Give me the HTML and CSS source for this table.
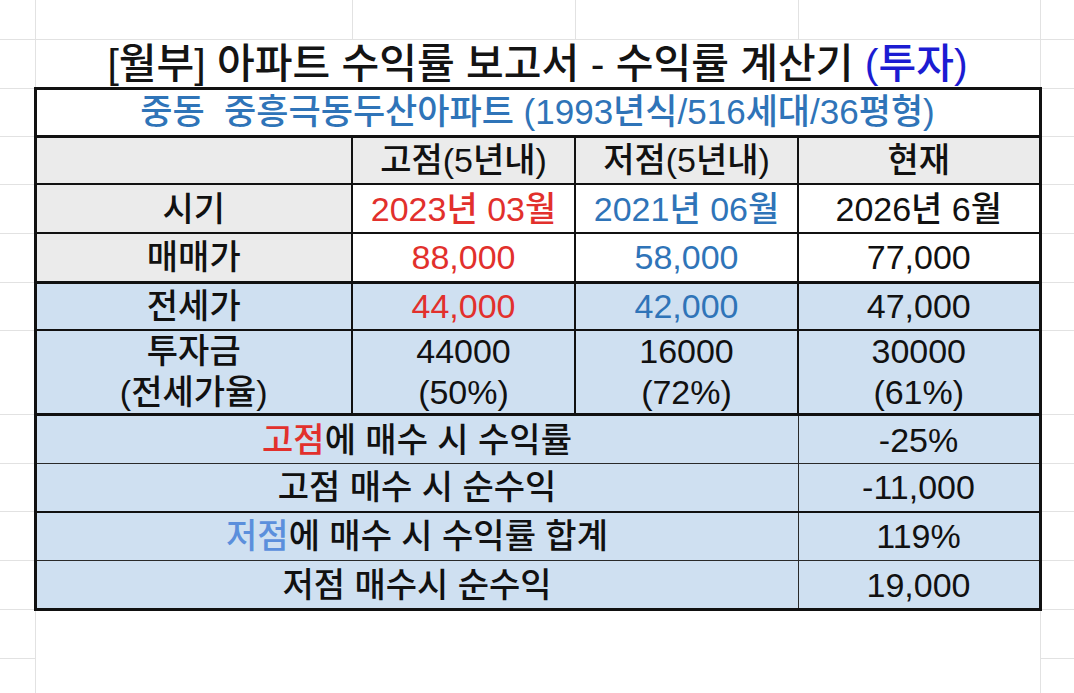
FILE: index.html
```html
<!DOCTYPE html>
<html lang="ko">
<head>
<meta charset="utf-8">
<title>[월부] 아파트 수익률 보고서</title>
<link rel="stylesheet" href="styles.css">
</head>
<body>
<table class="sheet">
  <colgroup>
    <col class="c-m"><col class="c-a"><col class="c-b"><col class="c-c"><col class="c-d"><col class="c-m">
  </colgroup>
  <tr class="h39">
    <td class="m ml"></td><td class="g"></td><td class="g"></td><td class="g"></td><td class="g"></td><td class="m mr"></td>
  </tr>
  <tr class="h49">
    <td class="m ml"></td>
    <td colspan="4" class="title">[월부] 아파트 수익률 보고서 - 수익률 계산기 <span class="t-blue">(투자)</span></td>
    <td class="m mr"></td>
  </tr>
  <tr class="h48">
    <td class="m ml"></td>
    <td colspan="4" class="loc">중동&nbsp; 중흥극동두산아파트 (1993년식/516세대/36평형)</td>
    <td class="m mr"></td>
  </tr>
  <tr class="h48">
    <td class="m ml"></td>
    <td class="cell l gray"></td>
    <td class="cell gray">고점(5년내)</td>
    <td class="cell gray">저점(5년내)</td>
    <td class="cell r gray">현재</td>
    <td class="m mr"></td>
  </tr>
  <tr class="h49">
    <td class="m ml"></td>
    <td class="cell l gray">시기</td>
    <td class="cell red">2023년 03월</td>
    <td class="cell blue">2021년 06월</td>
    <td class="cell r">2026년 6월</td>
    <td class="m mr"></td>
  </tr>
  <tr class="h49">
    <td class="m ml"></td>
    <td class="cell l gray sep">매매가</td>
    <td class="cell red sep">88,000</td>
    <td class="cell blue sep">58,000</td>
    <td class="cell r sep">77,000</td>
    <td class="m mr"></td>
  </tr>
  <tr class="h48">
    <td class="m ml"></td>
    <td class="cell l lb">전세가</td>
    <td class="cell lb red">44,000</td>
    <td class="cell lb blue">42,000</td>
    <td class="cell r lb">47,000</td>
    <td class="m mr"></td>
  </tr>
  <tr class="h83">
    <td class="m ml"></td>
    <td class="cell l lb sep two">투자금<br>(전세가율)</td>
    <td class="cell lb sep two">44000<br>(50%)</td>
    <td class="cell lb sep two">16000<br>(72%)</td>
    <td class="cell r lb sep two">30000<br>(61%)</td>
    <td class="m mr"></td>
  </tr>
  <tr class="h49">
    <td class="m ml"></td>
    <td colspan="3" class="bot l lb"><span class="red">고점</span>에 매수 시 수익률</td>
    <td class="bot r lb">-25%</td>
    <td class="m mr"></td>
  </tr>
  <tr class="h48">
    <td class="m ml"></td>
    <td colspan="3" class="bot l lb mid">고점 매수 시 순수익</td>
    <td class="bot r lb mid">-11,000</td>
    <td class="m mr"></td>
  </tr>
  <tr class="h49">
    <td class="m ml"></td>
    <td colspan="3" class="bot l lb"><span class="sky">저점</span>에 매수 시 수익률 합계</td>
    <td class="bot r lb">119%</td>
    <td class="m mr"></td>
  </tr>
  <tr class="h49">
    <td class="m ml"></td>
    <td colspan="3" class="bot l lb last">저점 매수시 순수익</td>
    <td class="bot r lb last">19,000</td>
    <td class="m mr"></td>
  </tr>
  <tr class="h49">
    <td class="m ml"></td><td colspan="4" class="blank"></td><td class="m mr"></td>
  </tr>
  <tr class="h49">
    <td class="m ml"></td><td colspan="4" class="blank"></td><td class="m mr"></td>
  </tr>
</table>
</body>
</html>
```
FILE: styles.css
```css
html, body {
  margin: 0;
  padding: 0;
  background: #ffffff;
  overflow: hidden;
}
body {
  width: 1074px;
  height: 693px;
  font-family: "Liberation Sans", "Noto Sans CJK KR", sans-serif;
  color: #111111;
}
.sheet {
  width: 1074px;
  table-layout: fixed;
  border-collapse: collapse;
  border-spacing: 0;
}
.c-m { width: 35px; }
.c-a { width: 317px; }
.c-b { width: 223px; }
.c-c { width: 223px; }
.c-d { width: 242px; }

.h39 { height: 39px; }
.h48 { height: 48px; }
.h49 { height: 49px; }
.h83 { height: 83px; }

td {
  padding: 0;
  text-align: center;
  vertical-align: middle;
  white-space: nowrap;
  font-size: 34px;
  font-weight: 500;
  line-height: 40px;
}

/* spreadsheet gridlines */
.m { border-bottom: 1px solid #e2e2e2; }
.ml { border-right: 1px solid #e2e2e2; }
.mr { border-left: 1px solid #e2e2e2; }
.g {
  border-right: 1px solid #e2e2e2;
  border-bottom: 1px solid #e2e2e2;
}
.blank { border: none; }

.title {
  font-size: 41px;
  line-height: 46px;
  vertical-align: bottom;
  padding-bottom: 0;
  color: #141414;
}
.t-blue { color: #1c1cd2; }

.loc {
  border: 3px solid #111111;
  font-size: 35px;
  color: #2f74b8;
  background: #ffffff;
}

.cell { border: 2px solid #111111; background: #ffffff; }
.cell.l { border-left: 3px solid #111111; }
.cell.r { border-right: 3px solid #111111; }
.cell.sep { border-bottom: 3px solid #111111; }
.cell.gray { background: #ebebeb; }
.cell.lb { background: #cfe0f1; }
.two { line-height: 41px; }

.bot { border: 1px solid #2a2a2a; background: #cfe0f1; }
.bot.l { border-left: 3px solid #111111; }
.bot.r { border-right: 3px solid #111111; }
.bot.mid { border-bottom: 2px solid #111111; }
.bot.last { border-bottom: 3px solid #111111; }

.red { color: #e2302c; }
.blue { color: #2f74b8; }
.sky { color: #5b8fdc; }
```
